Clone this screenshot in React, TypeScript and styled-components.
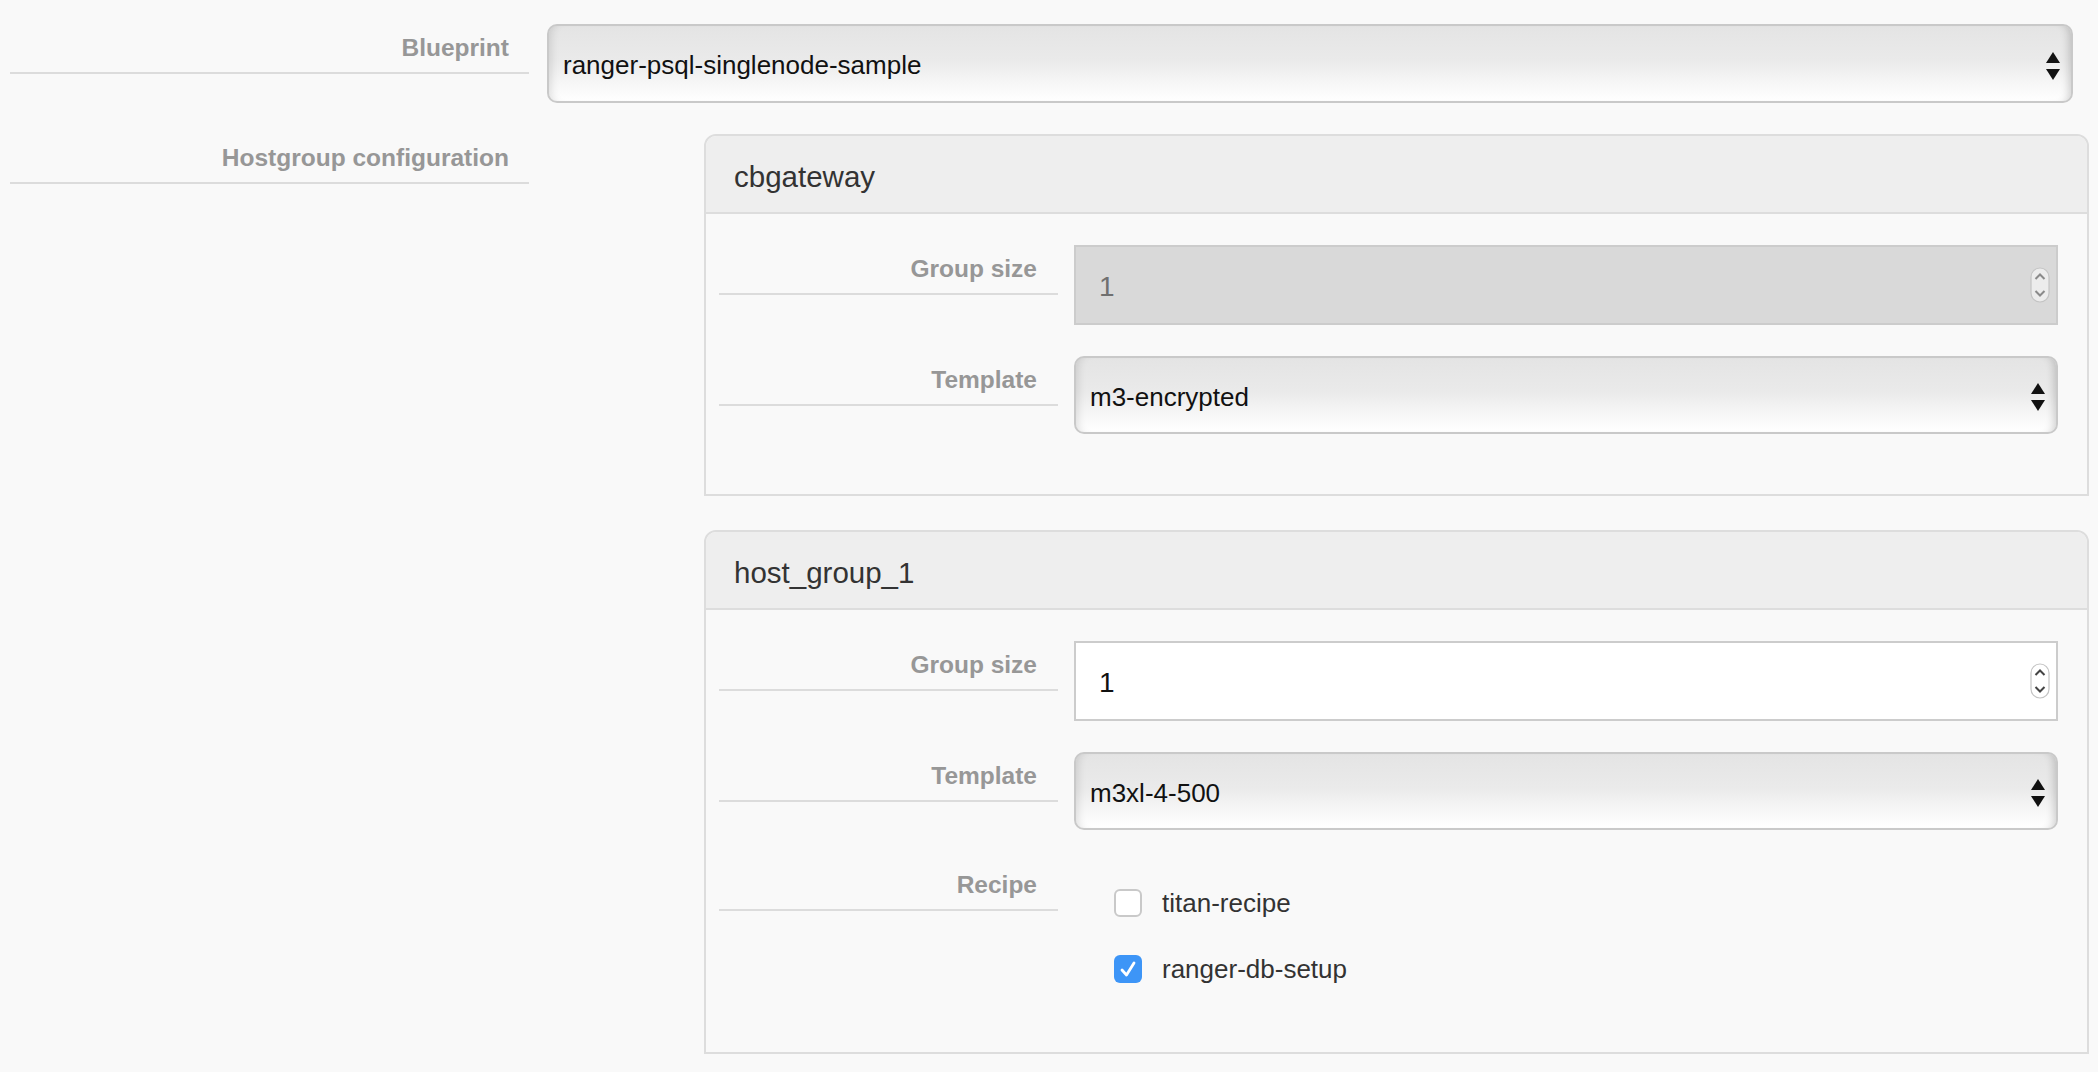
import styled, { createGlobalStyle } from "styled-components";

const GlobalStyle = createGlobalStyle`
    body {
        margin: 0;
        background: #f9f9f9;
        font-family: "Liberation Sans", Arial, sans-serif;
    }
`;

const Page = styled.div`
    padding: 24px 9px 0 10px;
`;

const FormRow = styled.div`
    display: grid;
    grid-template-columns: 519px 1fr;
    column-gap: 18px;
    margin-bottom: 31px;
`;

const Label = styled.div<{ $pad?: number }>`
    align-self: start;
    text-align: right;
    padding: 10px ${(props) => props.$pad ?? 20}px 10px 0;
    line-height: 28px;
    border-bottom: 2px solid #dcdcdc;
    font-size: 24.5px;
    font-weight: bold;
    color: #979797;
`;

const Select = styled.div<{ $gap?: number }>`
    display: flex;
    align-items: center;
    justify-content: space-between;
    box-sizing: border-box;
    height: ${(props) => (props.$gap ? 79 : 78)}px;
    margin-right: ${(props) => props.$gap ?? 0}px;
    padding: 4px 11px 0 14px;
    border: 2px solid #c9c9c9;
    border-radius: 10px;
    background: linear-gradient(
        to bottom,
        #e4e4e4 0%,
        #eaeaea 45%,
        #f6f6f6 75%,
        #ffffff 100%
    );
    box-shadow: inset -9px 0 8px -7px rgba(0, 0, 0, 0.18),
        inset 9px 0 8px -7px rgba(0, 0, 0, 0.12);
    font-size: 26px;
    color: #111;
`;

const Panels = styled.div`
    display: flex;
    flex-direction: column;
    gap: 34px;
    margin-left: 157px;
`;

const Panel = styled.div`
    border: 2px solid #dddddd;
    border-radius: 12px 12px 0 0;
    background: #f9f9f9;
`;

const PanelHeading = styled.div`
    padding: 23px 28px 17px;
    line-height: 36px;
    font-size: 29.5px;
    color: #333;
    background: #eeeeee;
    border-bottom: 2px solid #dddddd;
    border-radius: 10px 10px 0 0;
`;

const PanelBody = styled.div`
    padding: 31px 29px 29px 13px;
`;

const FieldRow = styled.div`
    display: grid;
    grid-template-columns: 339px 1fr;
    column-gap: 16px;
    margin-bottom: 31px;
`;

const NumberBox = styled.div<{ $disabled?: boolean }>`
    display: flex;
    align-items: center;
    justify-content: space-between;
    box-sizing: border-box;
    height: 80px;
    padding: 4px 6px 0 23px;
    border: 2px solid #cccccc;
    background: ${(props) => (props.$disabled ? "#d9d9d9" : "#ffffff")};
    font-size: 28px;
    color: ${(props) => (props.$disabled ? "#707070" : "#111")};
`;

const Spinner = styled.svg`
    flex-shrink: 0;
    margin-bottom: 4px;
`;

const CheckList = styled.div`
    display: flex;
    flex-direction: column;
    gap: 22px;
    padding: 20px 0 1px 40px;
`;

const CheckItem = styled.label`
    display: flex;
    align-items: center;
    gap: 20px;
    height: 44px;
    font-size: 26px;
    color: #333;
`;

const Box = styled.span<{ $checked?: boolean }>`
    display: flex;
    align-items: center;
    justify-content: center;
    box-sizing: border-box;
    width: 28px;
    height: 28px;
    border-radius: 6px;
    border: ${(props) => (props.$checked ? "none" : "2px solid #c9c9c9")};
    background: ${(props) => (props.$checked ? "#3d95f7" : "#ffffff")};
`;

function Arrows() {
    return (
        <svg width="14" height="28" viewBox="0 0 14 28">
            <path d="M7 0 L14 11 L0 11 Z" fill="#111" />
            <path d="M0 17 L14 17 L7 28 Z" fill="#111" />
        </svg>
    );
}

function SpinButton({ disabled }: { disabled?: boolean }) {
    const stroke = disabled ? "#8a8a8a" : "#444";
    return (
        <Spinner width="20" height="36" viewBox="0 0 20 36">
            <rect
                x="1"
                y="1"
                width="18"
                height="34"
                rx="9"
                fill={disabled ? "#ececec" : "#ffffff"}
                stroke="#c4c4c4"
                strokeWidth="1.2"
            />
            <path d="M5.5 12 L10 7.5 L14.5 12" fill="none" stroke={stroke} strokeWidth="2" />
            <path d="M5.5 24 L10 28.5 L14.5 24" fill="none" stroke={stroke} strokeWidth="2" />
        </Spinner>
    );
}

function Check({ checked, text }: { checked?: boolean; text: string }) {
    return (
        <CheckItem>
            <Box $checked={checked}>
                {checked && (
                    <svg width="18" height="18" viewBox="0 0 18 18">
                        <path
                            d="M3 10 L7.5 15 L15 3"
                            fill="none"
                            stroke="#fff"
                            strokeWidth="2.8"
                            strokeLinecap="round"
                            strokeLinejoin="round"
                        />
                    </svg>
                )}
            </Box>
            {text}
        </CheckItem>
    );
}

type Group = {
    name: string;
    size: number;
    locked: boolean;
    template: string;
    recipes?: { name: string; checked: boolean }[];
};

const groups: Group[] = [
    { name: "cbgateway", size: 1, locked: true, template: "m3-encrypted" },
    {
        name: "host_group_1",
        size: 1,
        locked: false,
        template: "m3xl-4-500",
        recipes: [
            { name: "titan-recipe", checked: false },
            { name: "ranger-db-setup", checked: true },
        ],
    },
];

function App() {
    return (
        <Page>
            <GlobalStyle />
            <FormRow>
                <Label>Blueprint</Label>
                <Select $gap={16}>
                    <span>ranger-psql-singlenode-sample</span>
                    <Arrows />
                </Select>
            </FormRow>
            <FormRow>
                <Label>Hostgroup configuration</Label>
                <Panels>
                    {groups.map((group) => (
                        <Panel key={group.name}>
                            <PanelHeading>{group.name}</PanelHeading>
                            <PanelBody>
                                <FieldRow>
                                    <Label $pad={21}>Group size</Label>
                                    <NumberBox $disabled={group.locked}>
                                        <span>{group.size}</span>
                                        <SpinButton disabled={group.locked} />
                                    </NumberBox>
                                </FieldRow>
                                <FieldRow>
                                    <Label $pad={21}>Template</Label>
                                    <Select>
                                        <span>{group.template}</span>
                                        <Arrows />
                                    </Select>
                                </FieldRow>
                                {group.recipes && (
                                    <FieldRow>
                                        <Label $pad={21}>Recipe</Label>
                                        <CheckList>
                                            {group.recipes.map((r) => (
                                                <Check
                                                    key={r.name}
                                                    checked={r.checked}
                                                    text={r.name}
                                                />
                                            ))}
                                        </CheckList>
                                    </FieldRow>
                                )}
                            </PanelBody>
                        </Panel>
                    ))}
                </Panels>
            </FormRow>
        </Page>
    );
}

export default App;
